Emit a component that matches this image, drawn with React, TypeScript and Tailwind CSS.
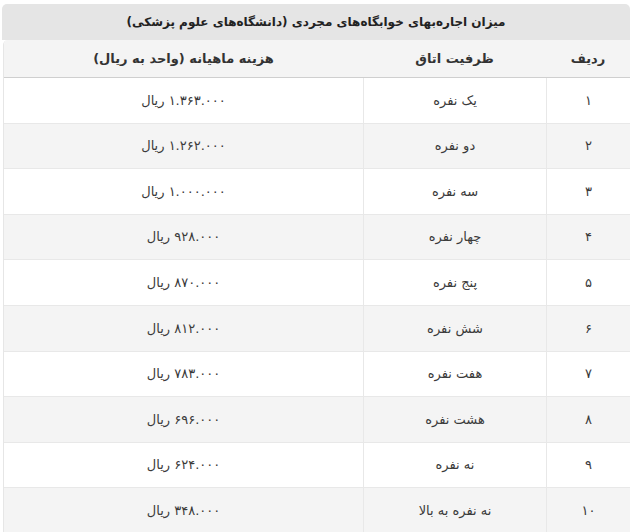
const rows = [
  { n: "۱", cap: "یک نفره", cost: "۱.۳۶۳.۰۰۰ ریال" },
  { n: "۲", cap: "دو نفره", cost: "۱.۲۶۲.۰۰۰ ریال" },
  { n: "۳", cap: "سه نفره", cost: "۱.۰۰۰.۰۰۰ ریال" },
  { n: "۴", cap: "چهار نفره", cost: "۹۲۸.۰۰۰ ریال" },
  { n: "۵", cap: "پنج نفره", cost: "۸۷۰.۰۰۰ ریال" },
  { n: "۶", cap: "شش نفره", cost: "۸۱۲.۰۰۰ ریال" },
  { n: "۷", cap: "هفت نفره", cost: "۷۸۳.۰۰۰ ریال" },
  { n: "۸", cap: "هشت نفره", cost: "۶۹۶.۰۰۰ ریال" },
  { n: "۹", cap: "نه نفره", cost: "۶۲۴.۰۰۰ ریال" },
  { n: "۱۰", cap: "نه نفره به بالا", cost: "۳۴۸.۰۰۰ ریال" },
];

export default function App() {
  return (
    <div className="w-[630px] h-[532px] overflow-hidden bg-white pt-[4px] pl-[2px]">
      <div dir="rtl" className="font-['DejaVu_Sans',sans-serif] text-[#333]">
        {/* caption */}
        <div className="h-[36px] bg-[#e5e5e5] rounded-t-[5px] flex items-center justify-center text-[12px] font-bold text-[#222]">
          میزان اجاره‌بهای خوابگاه‌های مجردی (دانشگاه‌های علوم پزشکی)
        </div>

        <div className="ml-px border-l border-[#e6e6e6] rounded-tl-[5px] overflow-hidden">
          <div className="grid grid-cols-[84px_183px_1fr] h-[38px] bg-[#f4f4f4] border-b border-[#cfcfcf] text-[13px] font-bold text-[#333]">
            <div className="flex items-center justify-center">ردیف</div>
            <div className="flex items-center justify-center">ظرفیت اتاق</div>
            <div className="flex items-center justify-center">هزینه ماهیانه (واحد به ریال)</div>
          </div>

          {rows.map((r, i) => (
            <div
              key={r.n}
              className={
                "grid grid-cols-[84px_183px_1fr] h-[45.6px] border-b border-[#e8e8e8] text-[13px] text-[#3a3a3a] " +
                (i % 2 === 1 ? "bg-[#f4f4f4]" : "bg-white")
              }
            >
              <div className="flex items-center justify-center border-l border-[#e8e8e8]">{r.n}</div>
              <div className="flex items-center justify-center border-l border-[#e8e8e8]">{r.cap}</div>
              <div className="flex items-center justify-center">{r.cost}</div>
            </div>
          ))}
        </div>
      </div>
    </div>
  );
}
